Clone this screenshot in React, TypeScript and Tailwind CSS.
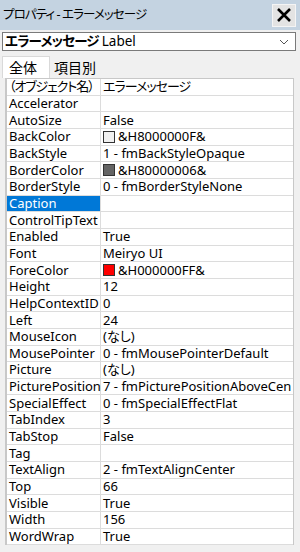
const FONT = "font-['Noto_Sans','Noto_Sans_CJK_JP',sans-serif]"

type Row = { name: string; value?: string; swatch?: string; selected?: boolean; jp?: boolean }

const ROWS: Row[] = [
  { name: '（オブジェクト名）', value: 'エラーメッセージ', jp: true },
  { name: 'Accelerator' },
  { name: 'AutoSize', value: 'False' },
  { name: 'BackColor', value: '&H8000000F&', swatch: 'bg-[#f0f0f0]' },
  { name: 'BackStyle', value: '1 - fmBackStyleOpaque' },
  { name: 'BorderColor', value: '&H80000006&', swatch: 'bg-[#646464]' },
  { name: 'BorderStyle', value: '0 - fmBorderStyleNone' },
  { name: 'Caption', selected: true },
  { name: 'ControlTipText' },
  { name: 'Enabled', value: 'True' },
  { name: 'Font', value: 'Meiryo UI' },
  { name: 'ForeColor', value: '&H000000FF&', swatch: 'bg-[#ff0000]' },
  { name: 'Height', value: '12' },
  { name: 'HelpContextID', value: '0' },
  { name: 'Left', value: '24' },
  { name: 'MouseIcon', value: '(なし)' },
  { name: 'MousePointer', value: '0 - fmMousePointerDefault' },
  { name: 'Picture', value: '(なし)' },
  { name: 'PicturePosition', value: '7 - fmPicturePositionAboveCen' },
  { name: 'SpecialEffect', value: '0 - fmSpecialEffectFlat' },
  { name: 'TabIndex', value: '3' },
  { name: 'TabStop', value: 'False' },
  { name: 'Tag' },
  { name: 'TextAlign', value: '2 - fmTextAlignCenter' },
  { name: 'Top', value: '66' },
  { name: 'Visible', value: 'True' },
  { name: 'Width', value: '156' },
  { name: 'WordWrap', value: 'True' },
]

function PropRow({ row }: { row: Row }) {
  return (
    <div className="flex h-[16.67px] border-b border-[#dcdcdc] text-[13px] leading-[15px]">
      <div
        className={`w-[94px] shrink-0 flex items-center pl-[2px] border-r border-[#dcdcdc] whitespace-nowrap ${
          row.selected ? 'bg-[#0078d7] text-white' : 'text-black'
        } ${row.jp ? 'tracking-[-1.1px]' : ''}`}
      >
        {row.name}
      </div>
      <div
        className={`flex-1 min-w-0 flex items-center gap-[3px] pl-[2px] whitespace-nowrap text-black ${
          row.jp ? 'tracking-[-1px]' : ''
        }`}
      >
        {row.swatch && <span className={`w-[12px] h-[12px] shrink-0 border border-[#333] ${row.swatch}`} />}
        {row.value}
      </div>
    </div>
  )
}

export default function App() {
  return (
    <div className={`w-[300px] h-[552px] bg-[#f0f0f0] overflow-hidden flex flex-col ${FONT} [font-feature-settings:'palt']`}>
      {/* title bar */}
      <div className="h-[30px] bg-[#c4d3e1] flex items-center pl-[3px] text-[12.5px] tracking-[-0.9px] text-black">
        <span>プロパティ&nbsp;-&nbsp;エラーメッセージ</span>
        <button className="ml-auto mr-[4px] w-[24px] h-[23px] bg-[#e3e3e3] border border-[#f4f4f4] flex items-center justify-center">
          <svg width="16" height="16" viewBox="0 0 16 16">
            <path d="M2 2 L14 14 M14 2 L2 14" stroke="#000" strokeWidth="2.6" />
          </svg>
        </button>
      </div>

      {/* object combo */}
      <div className="mt-[2px] ml-[2px] w-[294px] h-[19px] bg-white border border-[#7a7a7a] flex items-center pl-[2px] text-[13.5px] leading-[17px]">
        <span className="font-bold tracking-[-0.8px]">エラーメッセージ</span>
        <span className="ml-[3px]">Label</span>
        <svg className="ml-auto mr-[6px]" width="10" height="6" viewBox="0 0 10 6">
          <path d="M1 1 L5 5 L9 1" stroke="#555" strokeWidth="1" fill="none" />
        </svg>
      </div>

      {/* tabs */}
      <div className="mt-[3px] flex items-end h-[24px] pl-[2px] text-[14px] leading-[18px]">
        <div className="h-[22px] w-[48px] bg-white border-t border-l border-r border-[#d9d9d9] flex items-center pl-[6px]">全体</div>
        <div className="h-[20px] w-[48px] flex items-center pl-[4px]">項目別</div>
      </div>

      {/* property grid */}
      <div className="ml-[5px] w-[289px] bg-white border-l-2 border-t border-r border-[#c8c8c8]">
        {ROWS.map((r) => (
          <PropRow key={r.name} row={r} />
        ))}
      </div>
    </div>
  )
}
